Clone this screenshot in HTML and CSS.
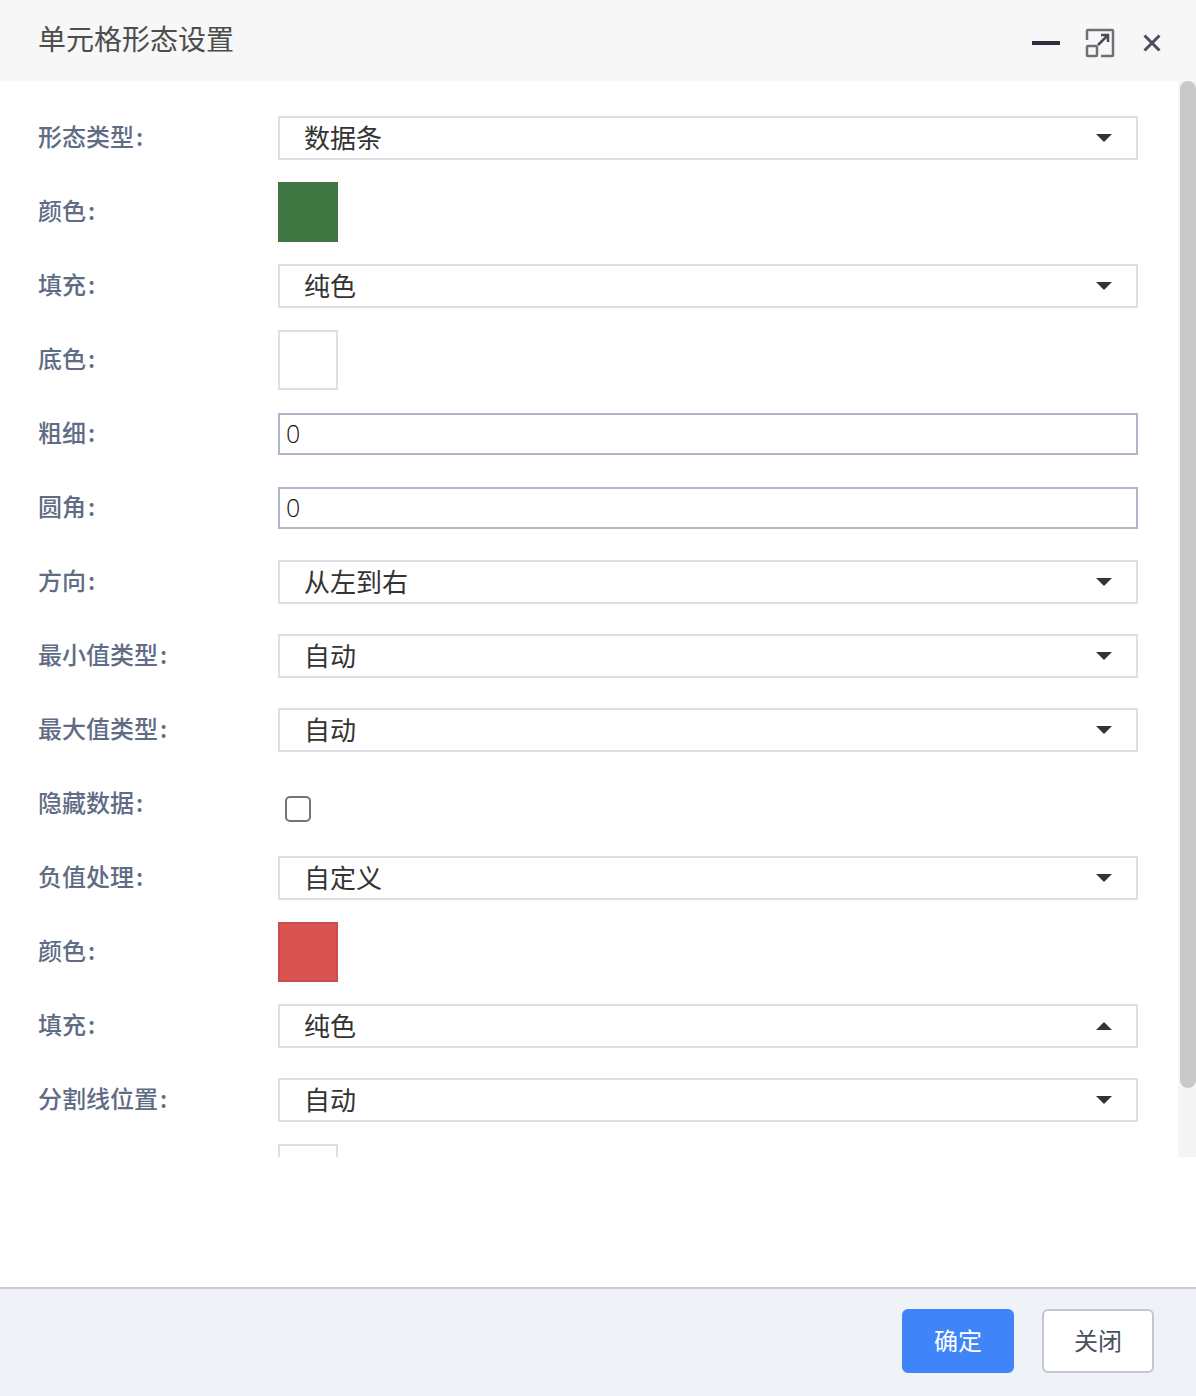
FILE: index.html
```html
<!DOCTYPE html>
<html lang="zh-CN">
<head>
    <meta charset="UTF-8">
    <meta name="viewport" content="width=device-width, initial-scale=1.0">
    <title>单元格形态设置</title>
    <link rel="stylesheet" href="styles.css">
</head>
<body>
    <div class="dialog">
        <div class="dialog-header">
            <h1 class="dialog-title">单元格形态设置</h1>
            <div class="window-tools">
                <svg class="tool-min" width="28" height="4" viewBox="0 0 28 4"><rect width="28" height="4" fill="#2e2e42"/></svg>
                <svg class="tool-max" width="30" height="30" viewBox="0 0 30 30" fill="none">
                    <path d="M2 12V3a1 1 0 0 1 1-1h24a1 1 0 0 1 1 1v24a1 1 0 0 1-1 1H16" stroke="#6f6f7a" stroke-width="2.5"/>
                    <rect x="2" y="18" width="10" height="10" rx="1" stroke="#6f6f7a" stroke-width="2.5"/>
                    <path d="M13 17L23 7M16 7h7v7" stroke="#4a4a58" stroke-width="2.5"/>
                </svg>
                <svg class="tool-close" width="18" height="18" viewBox="0 0 18 18"><path d="M1.5 1.5l15 15M16.5 1.5l-15 15" stroke="#4d4d5c" stroke-width="3"/></svg>
            </div>
        </div>

        <div class="dialog-body">
            <div class="scroll-wrap">
                <form class="form">
                    <div class="row">
                        <label class="label">形态类型<span class="colon">:</span></label>
                        <div class="select"><span>数据条</span><i class="arrow"></i></div>
                    </div>
                    <div class="row">
                        <label class="label">颜色<span class="colon">:</span></label>
                        <div class="swatch swatch-green"></div>
                    </div>
                    <div class="row">
                        <label class="label">填充<span class="colon">:</span></label>
                        <div class="select"><span>纯色</span><i class="arrow"></i></div>
                    </div>
                    <div class="row">
                        <label class="label">底色<span class="colon">:</span></label>
                        <div class="swatch"></div>
                    </div>
                    <div class="row">
                        <label class="label">粗细<span class="colon">:</span></label>
                        <input class="text-input" type="text" value="0">
                    </div>
                    <div class="row">
                        <label class="label">圆角<span class="colon">:</span></label>
                        <input class="text-input" type="text" value="0">
                    </div>
                    <div class="row">
                        <label class="label">方向<span class="colon">:</span></label>
                        <div class="select"><span>从左到右</span><i class="arrow"></i></div>
                    </div>
                    <div class="row">
                        <label class="label">最小值类型<span class="colon">:</span></label>
                        <div class="select"><span>自动</span><i class="arrow"></i></div>
                    </div>
                    <div class="row">
                        <label class="label">最大值类型<span class="colon">:</span></label>
                        <div class="select"><span>自动</span><i class="arrow"></i></div>
                    </div>
                    <div class="row">
                        <label class="label">隐藏数据<span class="colon">:</span></label>
                        <input class="checkbox" type="checkbox">
                    </div>
                    <div class="row">
                        <label class="label">负值处理<span class="colon">:</span></label>
                        <div class="select"><span>自定义</span><i class="arrow"></i></div>
                    </div>
                    <div class="row">
                        <label class="label">颜色<span class="colon">:</span></label>
                        <div class="swatch swatch-red"></div>
                    </div>
                    <div class="row">
                        <label class="label">填充<span class="colon">:</span></label>
                        <div class="select"><span>纯色</span><i class="arrow arrow-up"></i></div>
                    </div>
                    <div class="row">
                        <label class="label">分割线位置<span class="colon">:</span></label>
                        <div class="select"><span>自动</span><i class="arrow"></i></div>
                    </div>
                    <div class="row">
                        <div class="label"></div>
                        <div class="swatch"></div>
                    </div>
                </form>
                <div class="scrollbar"><div class="scrollbar-thumb"></div></div>
            </div>
        </div>

        <div class="dialog-footer">
            <button class="btn btn-primary" type="button">确定</button>
            <button class="btn" type="button">关闭</button>
        </div>
    </div>
</body>
</html>
```

FILE: styles.css
```css
* {
    margin: 0;
    padding: 0;
    box-sizing: border-box;
}

body {
    background-color: #fff;
    font-family: "Noto Sans CJK SC", "Noto Sans", sans-serif;
}

.dialog {
    display: flex;
    flex-direction: column;
    width: 1196px;
    height: 1396px;
}

.dialog-header {
    display: flex;
    justify-content: space-between;
    height: 81px;
    padding: 0 35px 0 38px;
    background-color: #f7f7f7;
}

.dialog-title {
    font-size: 28px;
    font-weight: 400;
    line-height: 76px;
    color: #4d4d4d;
}

.window-tools {
    display: flex;
    align-items: center;
    padding-top: 5px;
}

.tool-min {
    margin-right: 25px;
}

.tool-max {
    margin-right: 28px;
}

.dialog-body {
    flex: 1;
    background-color: #fff;
}

.scroll-wrap {
    display: flex;
    height: 1076px;
    overflow: hidden;
}

.form {
    flex: 1;
    padding: 20px 40px 0 38px;
    overflow: hidden;
}

.row {
    display: flex;
    align-items: center;
    height: 74px;
}

.label {
    flex-shrink: 0;
    width: 240px;
    margin-top: -6px;
    font-size: 24px;
    font-weight: 500;
    color: #5f6c85;
}

.colon {
    margin-left: 2px;
}

.select {
    display: flex;
    flex: 1;
    justify-content: space-between;
    align-items: center;
    height: 44px;
    padding: 0 24px 0 24px;
    border: 2px solid #dcdfe6;
    font-size: 26px;
    color: #333;
}

.select span {
    padding-bottom: 4px;
}

.arrow {
    width: 0;
    height: 0;
    border-left: 8px solid transparent;
    border-right: 8px solid transparent;
    border-top: 8px solid #333;
}

.arrow-up {
    border-top: 0;
    border-bottom: 8px solid #333;
}

.swatch {
    width: 60px;
    height: 60px;
    border: 2px solid #dcdfe6;
    background-color: #fff;
}

.swatch-green {
    border-color: #3f7642;
    background-color: #3f7642;
}

.swatch-red {
    border-color: #c94c4c;
    background-color: #da5252;
}

.text-input {
    flex: 1;
    height: 42px;
    padding: 0 6px 3px;
    border: 2px solid #b2b5c8;
    outline: none;
    font-family: "Open Sans", sans-serif;
    font-size: 25px;
    font-weight: 300;
    color: #111;
}

.checkbox {
    appearance: none;
    width: 26px;
    height: 26px;
    margin: 10px 0 0 7px;
    border: 2px solid #757575;
    border-radius: 5px;
    background-color: #fff;
}

.scrollbar {
    flex-shrink: 0;
    width: 18px;
    padding-left: 2px;
    background-color: #f5f5f5;
}

.scrollbar-thumb {
    height: 1007px;
    border-radius: 8px;
    background-color: #c9c9c9;
}

.dialog-footer {
    display: flex;
    justify-content: flex-end;
    gap: 28px;
    height: 109px;
    padding: 20px 42px 0 0;
    border-top: 2px solid #cccccc;
    background-color: #eff2f6;
}

.btn {
    width: 112px;
    height: 64px;
    padding-bottom: 3px;
    border: 2px solid #c2c7d0;
    border-radius: 6px;
    background-color: #fff;
    font-family: inherit;
    font-size: 24px;
    color: #48505c;
}

.btn-primary {
    border-color: #3f85f9;
    background-color: #3f85f9;
    color: #fff;
}
```
